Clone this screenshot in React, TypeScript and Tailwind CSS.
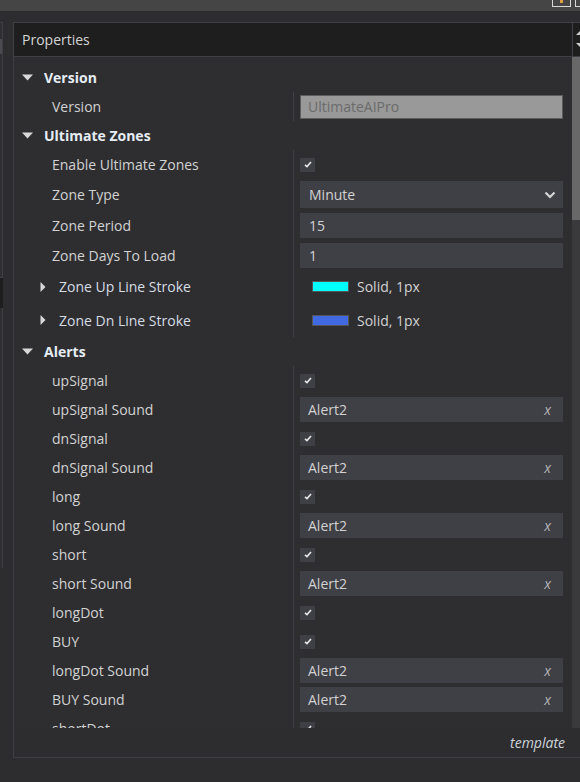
import React from 'react';

type Row =
  | { kind: 'cat'; label: string; h?: number }
  | { kind: 'check'; label: string; h?: number }
  | { kind: 'text'; label: string; value: string; h?: number; disabled?: boolean }
  | { kind: 'select'; label: string; value: string; h?: number }
  | { kind: 'sound'; label: string; value: string; h?: number }
  | { kind: 'stroke'; label: string; color: string; h?: number };

const rows: Row[] = [
  { kind: 'cat', label: 'Version' },
  { kind: 'text', label: 'Version', value: 'UltimateAIPro', disabled: true },
  { kind: 'cat', label: 'Ultimate Zones' },
  { kind: 'check', label: 'Enable Ultimate Zones' },
  { kind: 'select', label: 'Zone Type', value: 'Minute', h: 31 },
  { kind: 'text', label: 'Zone Period', value: '15', h: 31 },
  { kind: 'text', label: 'Zone Days To Load', value: '1' },
  { kind: 'stroke', label: 'Zone Up Line Stroke', color: 'bg-[#00ffff]', h: 33 },
  { kind: 'stroke', label: 'Zone Dn Line Stroke', color: 'bg-[#4169e1]', h: 34 },
  { kind: 'cat', label: 'Alerts' },
  { kind: 'check', label: 'upSignal' },
  { kind: 'sound', label: 'upSignal Sound', value: 'Alert2' },
  { kind: 'check', label: 'dnSignal' },
  { kind: 'sound', label: 'dnSignal Sound', value: 'Alert2' },
  { kind: 'check', label: 'long' },
  { kind: 'sound', label: 'long Sound', value: 'Alert2' },
  { kind: 'check', label: 'short' },
  { kind: 'sound', label: 'short Sound', value: 'Alert2' },
  { kind: 'check', label: 'longDot' },
  { kind: 'check', label: 'BUY' },
  { kind: 'sound', label: 'longDot Sound', value: 'Alert2' },
  { kind: 'sound', label: 'BUY Sound', value: 'Alert2' },
  { kind: 'check', label: 'shortDot' },
];

function Caret({ open }: { open: boolean }) {
  return open ? (
    <svg width="11" height="7" viewBox="0 0 11 7" className="shrink-0">
      <path d="M0 0.5 L11 0.5 L5.5 6.5 Z" fill="#d8d8d8" />
    </svg>
  ) : (
    <svg width="6" height="10" viewBox="0 0 6 10" className="shrink-0">
      <path d="M0.5 0 L5.5 5 L0.5 10 Z" fill="#d8d8d8" />
    </svg>
  );
}

function Check() {
  return (
    <div className="w-[15px] h-[14px] bg-[#3f3f46] flex items-center justify-center">
      <svg width="8" height="7" viewBox="0 0 8 7">
        <path d="M1 3.8 L3 5.6 L7 1" stroke="#e8e8e8" strokeWidth="1.6" fill="none" />
      </svg>
    </div>
  );
}

function Value({ row }: { row: Row }) {
  switch (row.kind) {
    case 'check':
      return <Check />;
    case 'text':
      return row.disabled ? (
        <div className="w-[263px] h-[24px] bg-[#999999] border border-[#5c5c5c] flex items-center px-[7px] text-[#6b6b6b]">
          {row.value}
        </div>
      ) : (
        <div className="w-[263px] h-[25px] bg-[#3f3f46] flex items-center px-[9px]">{row.value}</div>
      );
    case 'select':
      return (
        <div className="w-[263px] h-[27px] bg-[#3f3f46] flex items-center justify-between pl-[9px] pr-[7px]">
          <span>{row.value}</span>
          <svg width="12" height="8" viewBox="0 0 12 8">
            <path d="M1.5 1.5 L6 6 L10.5 1.5" stroke="#d6d6d6" strokeWidth="2.2" fill="none" />
          </svg>
        </div>
      );
    case 'sound':
      return (
        <div className="w-[263px] h-[25px] bg-[#3f3f46] flex items-center justify-between pl-[8px] pr-[12px]">
          <span>{row.value}</span>
          <span className="italic text-[#b4b4b4] text-[14px]">x</span>
        </div>
      );
    case 'stroke':
      return (
        <div className="flex items-center gap-[8px] pl-[12px]">
          <div className={`w-[37px] h-[11px] border border-[#555] ${row.color}`} />
          <span>Solid, 1px</span>
        </div>
      );
    default:
      return null;
  }
}

export default function App() {
  return (
    <div
      className="w-[580px] h-[782px] bg-[#2d2d30] overflow-hidden flex flex-col text-[14px] text-[#d2d2d2]"
      style={{ fontFamily: '"Open Sans", "Noto Sans", sans-serif' }}
    >
      {/* top bar */}
      <div className="h-[12px] bg-[#454545] border-b border-[#2a2a2a] flex justify-end items-start gap-[4px] shrink-0">
        <div className="w-[19px] h-[7px] border border-t-0 border-[#d8d8d8] flex justify-center">
          <div className="w-[3px] h-[3px] bg-[#e0a040]" />
        </div>
        <div className="w-[5px] h-[7px] border border-t-0 border-r-0 border-[#d8d8d8]" />
      </div>

      <div className="flex flex-1 pt-[10px]">
        {/* left strip */}
        <div className="w-[13px] shrink-0 flex flex-col">
          <div className="w-[3px] h-[256px] border-r border-y border-[#3f3f46] bg-[#2f2f32] pt-[16px]">
            <div className="w-[2px] h-[15px] bg-[#4a4a4f]" />
          </div>
          <div className="w-[3px] h-[30px] bg-[#1e1e1e]" />
          <div className="w-[3px] h-[260px] border-r border-[#3f3f46] bg-[#2f2f32]" />
        </div>

        {/* properties panel */}
        <div className="flex-1 flex flex-col">
          <div className="h-[736px] border-l border-y border-[#3f3f46] flex flex-col">
            {/* header */}
            <div className="h-[34px] bg-[#1e1e1e] border-b border-[#3f3f46] flex shrink-0">
              <div className="flex-1 flex items-center pl-[8px] text-[14px] text-[#d4d4d4]">Properties</div>
              <div className="w-[8px] border-l border-[#3f3f46] flex flex-col items-end justify-center gap-[8px] pb-[2px]">
                <svg width="4" height="4" viewBox="0 0 4 4">
                  <path d="M0 4 L4 0 L4 4 Z" fill="#cfcfcf" />
                </svg>
                <svg width="4" height="4" viewBox="0 0 4 4">
                  <path d="M0 0 L4 0 L4 4 Z" fill="#cfcfcf" />
                </svg>
              </div>
            </div>

            {/* grid + scrollbar */}
            <div className="flex h-[671px] bg-[#2e2e31] overflow-hidden">
              <div className="flex-1 pt-[6px]">
                {rows.map((row, i) => {
                  const h = row.h ?? 29;
                  if (row.kind === 'cat') {
                    return (
                      <div key={i} className="flex items-center pl-[8px]" style={{ height: h }}>
                        <Caret open />
                        <span className="ml-[11px] font-bold text-[#e6ecf3]">{row.label}</span>
                      </div>
                    );
                  }
                  return (
                    <div key={i} className="flex" style={{ height: h }}>
                      {row.kind === 'stroke' ? (
                        <div className="w-[279px] flex items-center pl-[26px]">
                          <Caret open={false} />
                          <span className="ml-[13px] text-[#d6dce4]">{row.label}</span>
                        </div>
                      ) : (
                        <div className="w-[279px] flex items-center pl-[38px]">{row.label}</div>
                      )}
                      <div className="flex-1 border-l border-[#3f3f46] flex items-center pl-[6px]">
                        <Value row={row} />
                      </div>
                    </div>
                  );
                })}
              </div>
              <div className="w-[8px] bg-[#3a3a3d] shrink-0">
                <div className="h-[163px] bg-[#686868]" />
              </div>
            </div>

            {/* footer */}
            <div className="flex-1 flex items-center justify-end pr-[15px] italic text-[14px] text-[#cdd3da]">
              template
            </div>
          </div>
        </div>
      </div>
    </div>
  );
}
